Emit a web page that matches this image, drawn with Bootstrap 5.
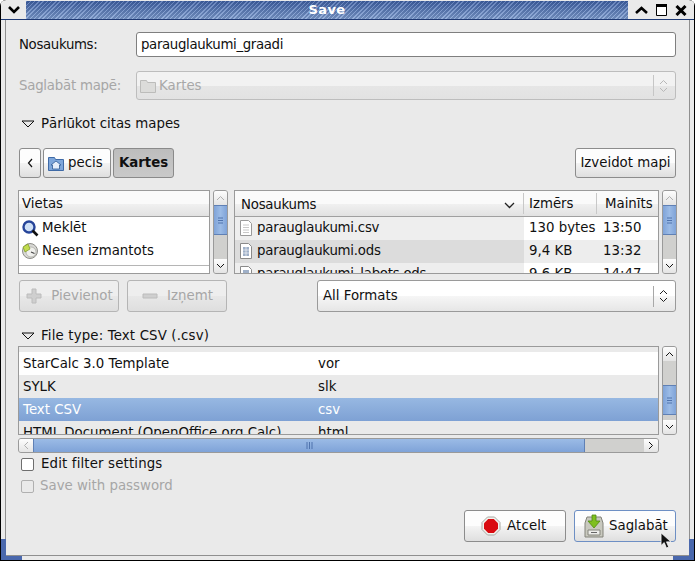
<!DOCTYPE html>
<html lang="lv">
<head>
    <meta charset="UTF-8">
    <meta name="viewport" content="width=device-width, initial-scale=1.0">
    <title>Save</title>
    <link href="https://cdn.jsdelivr.net/npm/bootstrap@5.3.0/dist/css/bootstrap.min.css" rel="stylesheet">
    <style>
        html, body { margin: 0; height: 561px; overflow: hidden; background: #fff; }
        body, .btn, .form-control { font-family: "DejaVu Sans", sans-serif; font-size: 13.33px; line-height: 16px; color: #101010; }

        /* window frame */
        .gtk-win { position: relative; width: 695px; height: 561px; background: #000; padding: 0 1px; border-radius: 6px 6px 0 0; overflow: hidden; }
        .gtk-frame { height: 560px; background: #eaeaea; display: flex; flex-direction: column; border-radius: 5px 5px 0 0; }
        .gtk-title { height: 19px; flex: none; display: flex; border-bottom: 1px solid #1f3a75; margin-top: 1px; }
        .gtk-menu-btn { width: 25px; background: #eaeaea; display: flex; align-items: center; justify-content: center; }
        .gtk-hatch { flex: 1; text-align: center; color: #fff; font-weight: 700; font-size: 13px; line-height: 18px; letter-spacing: .4px;
            background: repeating-linear-gradient(135deg, rgba(255,255,255,.2) 0 1px, rgba(0,0,0,.12) 1px 3px), linear-gradient(#3f62a8, #7f9fd4); }
        .gtk-wm-btns { width: 66px; background: #eaeaea; display: flex; align-items: center; justify-content: space-around; padding: 0 3px; }
        .gtk-inner { flex: 1; border: 4px solid #eaeaea; border-top: 0; min-height: 0; }
        .gtk-content { height: 100%; border: 1px solid #8f8f8f; border-top: 0; padding: 12px 13px 0 12px; position: relative; }
        .gtk-corner { position: absolute; background: #4a68ad; }
        .gtk-c1 { left: 1px; top: 539px; width: 5px; height: 21px; }
        .gtk-c2 { left: 1px; top: 556px; width: 21px; height: 4px; }
        .gtk-c3 { right: 1px; top: 539px; width: 5px; height: 21px; }
        .gtk-c4 { right: 1px; top: 556px; width: 21px; height: 4px; }
        .gtk-cursor { position: absolute; left: 660px; top: 532px; }

        /* widgets */
        .gtk-label { width: 118px; flex: none; padding-left: 1px; }
        .gtk-off { color: #a6a6a6; }
        .gtk-ls-a { letter-spacing: -.35px; }
        .gtk-ls-b { letter-spacing: -.24px; }
        .gtk-ls-c { letter-spacing: .15px; }
        .gtk-entry { height: 25px; border: 1px solid #7f7f7f; border-radius: 3px; background: #fff; padding: 3px 4px; box-shadow: none; }
        .gtk-combo { height: 29px; border: 1px solid #9a9a9a; border-radius: 3px; display: flex; align-items: center; background: linear-gradient(#ffffff 0 50%, #f6f6f6 50%, #e6e6e6); }
        .gtk-combo.is-off { background: linear-gradient(#f2f2f2 0 50%, #e6e6e6 50%, #e2e2e2); border-color: #bdbdbd; color: #a8a8a8; }
        .gtk-sep { width: 1px; height: 21px; background: #a8a8a8; }
        .gtk-combo.is-off .gtk-sep { background: #c6c6c6; }
        .gtk-btn { display: inline-flex; align-items: center; justify-content: center; border: 1px solid #8c8c8c; border-radius: 3px; padding: 0; color: #101010; background: linear-gradient(#fdfdfd 0 50%, #f4f4f4 50%, #dfdfdf); }
        .gtk-btn.is-on { background: linear-gradient(#bdbdbd, #c9c9c9); font-weight: 700; border-color: #8a8a8a; }
        .gtk-btn:disabled { color: #a6a6a6; border-color: #b5b5b5; background: linear-gradient(#eeeeee 0 50%, #e8e8e8 50%, #dedede); opacity: 1; }
        .gtk-btn.is-default { border-color: #6d8fc4; }
        .gtk-path-btn { height: 30px; }
        .gtk-tri { width: 14px; flex: none; margin-right: 6px; }

        /* file lists */
        .gtk-list { border: 1px solid #9a9a9a; background: #fff; overflow: hidden; height: 84px; flex: none; }
        .gtk-head { height: 26px; display: flex; border-bottom: 1px solid #a0a0a0; background: linear-gradient(#fafafa 0 50%, #f1f1f1 50%, #e2e2e2); }
        .gtk-head > div { padding: 3px 3px 0; margin: 2px 0; border-right: 1px solid #c8c8c8; }
        .gtk-row { height: 23px; padding-bottom: 2px; display: flex; align-items: center; white-space: nowrap; }
        .gtk-scroll-v { width: 15px; border: 1px solid #9a9a9a; border-radius: 3px; background: #d0d0ce; display: flex; flex-direction: column; overflow: hidden; flex: none; margin-left: 3px; }
        .gtk-sb-end { height: 14px; flex: none; background: linear-gradient(#fdfdfd, #e4e4e4); display: flex; align-items: center; justify-content: center; }
        .gtk-sb-thumb { height: 30px; background: linear-gradient(90deg, #7fa3d8, #9bbbe6 50%, #7fa3d8); border: 1px solid #5f80b5; display: flex; align-items: center; justify-content: center; flex: none; margin: 0 -1px; }
        .gtk-sb-gap { height: 5px; flex: none; }
        .gtk-places { width: 192px; }
        .gtk-files { width: 425px; margin-left: 6px; }
        .gtk-places-ic { margin: 0 3px 0 2px; flex: none; }
        .gtk-list-rule { height: 1px; background: #b5b5b5; margin: 2px 0 3px; }
        .gtk-col-name { width: 289px; flex: none; }
        .gtk-col-size { width: 73px; flex: none; }
        .gtk-col-date { width: 61px; flex: none; }
        .gtk-head .gtk-col-name { padding-left: 6px; }
        .gtk-head .gtk-col-size { padding-left: 5px; }
        .gtk-head .gtk-col-date { padding-left: 8px; }
        .gtk-cell { padding-left: 5px; }
        .gtk-date-cell { padding-left: 6px; }
        .gtk-sorted, .gtk-sorted-alt { height: 23px; padding-bottom: 2px; align-self: flex-start; }
        .gtk-sorted { background: #eeeeee; }
        .gtk-row-alt { background: #ededed; }
        .gtk-sorted-alt { background: #dcdcdc; }
        .gtk-fic { margin: 0 3px; flex: none; }

        /* filter list */
        .gtk-filter { width: 641px; flex: none; }
        .gtk-flist { height: 89px; border: 1px solid #9a9a9a; overflow: hidden; padding-top: 5px; }
        .gtk-frow { height: 23px; display: flex; align-items: center; padding-left: 4px; white-space: nowrap; }
        .gtk-frow.is-sel { background: linear-gradient(#97b8e2, #7ea1d4); color: #fff; }
        .gtk-fname { width: 295px; flex: none; }
        .gtk-scroll-h { height: 15px; margin-top: 3px; display: flex; border: 1px solid #9a9a9a; border-radius: 3px; background: #d0d0ce; overflow: hidden; }
        .gtk-hl { width: 14px; height: 100%; flex: none; }
        .gtk-hthumb { width: 552px; flex: none; margin: -1px 0; background: linear-gradient(#9bbbe6, #7fa3d8); border: 1px solid #5f80b5; display: flex; align-items: center; justify-content: center; }
        .gtk-sb-filter { height: 89px; }
        .gtk-check { width: 13px; height: 13px; border: 1px solid #6e6e6e; background: #fff; border-radius: 2px; flex: none; margin-right: 7px; }
        .gtk-check.is-off { border-color: #b0b0b0; background: #eaeaea; margin-right: 6px; }

        /* vertical rhythm */
        .gtk-row-save { margin-top: 14px; }
        .gtk-combo-ic { margin: 0 3px; flex: none; }
        .gtk-exp { height: 16px; padding-left: 3px; }
        .gtk-exp1 { margin-top: 16px; }
        .gtk-pathbar { margin-top: 16px; gap: 2px; padding-left: 1px; }
        .gtk-w22 { width: 22px; } .gtk-w61 { width: 61px; } .gtk-w101 { width: 101px; }
        .gtk-w68 { width: 68px; justify-content: flex-start; padding-left: 4px; }
        .gtk-lists { margin-top: 12px; height: 84px; }
        .gtk-actions { margin-top: 6px; height: 32px; gap: 8px; padding-left: 1px; }
        .gtk-act { width: 100px; height: 32px; }
        .gtk-fmt { width: 359px; height: 32px; }
        .gtk-fmt-txt { padding-left: 5px; }
        .gtk-exp2 { margin-top: 16px; }
        .gtk-filter-wrap { margin-top: 2px; height: 107px; }
        .gtk-chk { height: 20px; padding-left: 3px; }
        .gtk-chk1 { margin-top: 1px; }
        .gtk-chk2 { margin-top: 2px; }
        .gtk-bottom { margin-top: 14px; gap: 8px; }
        .gtk-dlg { width: 102px; height: 32px; justify-content: flex-start; }
        .gtk-dlg-a { padding-left: 16px; }
        .gtk-dlg-a svg { margin-right: 6px; }
        .gtk-dlg-b { padding-left: 9px; }
        .gtk-dlg-b svg { margin-right: 5px; }
    </style>
</head>
<body>
<div class="gtk-win">
    <div class="gtk-frame">
        <div class="gtk-title">
            <div class="gtk-menu-btn"><svg width="12" height="8" viewBox="0 0 12 8"><path d="M1 1l5 5 5-5" fill="none" stroke="#000" stroke-width="2.6"/></svg></div>
            <div class="gtk-hatch">Save</div>
            <div class="gtk-wm-btns">
                <svg width="13" height="8" viewBox="0 0 13 8"><path d="M1 7l5.500-5 5.500 5" fill="none" stroke="#000" stroke-width="2.600"/></svg>
                <svg width="11" height="12" viewBox="0 0 11 12"><path d="M.5 .5h10v11H.5z" fill="#fff" stroke="#000"/><path d="M0 0h11v3H0z"/></svg>
                <svg width="12" height="11" viewBox="0 0 12 11"><path d="M1.500 1l9 9M10.500 1l-9 9" fill="none" stroke="#000" stroke-width="3"/></svg>
            </div>
        </div>
        <div class="gtk-inner">
            <div class="gtk-content">
                <div class="d-flex align-items-center">
                    <div class="gtk-label gtk-ls-a">Nosaukums:</div>
                    <input class="form-control gtk-entry gtk-ls-a" type="text" value="parauglaukumi_graadi">
                </div>

                <div class="d-flex align-items-center gtk-row-save">
                    <div class="gtk-label gtk-off gtk-ls-b">Saglabāt mapē:</div>
                    <div class="gtk-combo is-off flex-grow-1">
                        <svg class="gtk-combo-ic" width="16" height="16" viewBox="0 0 16 16"><path d="M.5 2.500h6l1 2h8v10H.5z" fill="#dcdcda" stroke="#bcbcba"/></svg>
                        <span class="flex-grow-1">Kartes</span>
                        <span class="gtk-sep"></span>
                        <svg class="flex-none" width="21" height="16" viewBox="0 0 21 16"><path d="M6 6l3.500-3.500L13 6M6 10l3.500 3.500L13 10" fill="none" stroke="#b8b8b8"/></svg>
                    </div>
                </div>

                <div class="d-flex align-items-center gtk-exp gtk-exp1">
                    <svg class="gtk-tri" width="14" height="8" viewBox="0 0 14 8"><path d="M1 1h12L7 7z" fill="none" stroke="#111"/></svg>
                    <span>Pārlūkot citas mapes</span>
                </div>

                <div class="d-flex gtk-pathbar">
                    <button class="btn gtk-btn gtk-path-btn gtk-w22" type="button"><svg width="7" height="10" viewBox="0 0 7 10"><path d="M5 1L1.500 5 5 9" fill="none" stroke="#111" stroke-width="1.200"/></svg></button>
                    <button class="btn gtk-btn gtk-path-btn gtk-w68" type="button">
                        <svg width="16" height="17" viewBox="0 0 16 17" class="me-1"><path d="M.5 2.500h6l1 2h8v11H.5z" fill="#7ea6da" stroke="#3f6aa6"/><path d="M8 6l-5 4h1.500v4h7v-4H13z" fill="#e6eefa" stroke="#2f5a96" stroke-width=".8"/></svg>pecis</button>
                    <button class="btn gtk-btn gtk-path-btn is-on gtk-w61" type="button">Kartes</button>
                    <button class="btn gtk-btn gtk-path-btn ms-auto gtk-w101" type="button">Izveidot mapi</button>
                </div>

                <div class="d-flex gtk-lists">
                    <div class="gtk-list gtk-places">
                        <div class="gtk-head"><div class="border-0">Vietas</div></div>
                        <div class="gtk-row"><svg width="18" height="18" viewBox="0 0 18 18" class="gtk-places-ic"><circle cx="8" cy="8" r="5.500" fill="#cfe0f6" stroke="#27459a" stroke-width="2.400"/><path d="M11.500 11.500l5 5" stroke="#111" stroke-width="2.600"/></svg>Meklēt</div>
                        <div class="gtk-row"><svg width="18" height="18" viewBox="0 0 18 18" class="gtk-places-ic"><circle cx="9" cy="9" r="7.500" fill="#d8d8d4" stroke="#8d8d88"/><circle cx="10" cy="10" r="5" fill="#efefec" stroke="#a8a8a2" stroke-width=".7"/><path d="M2 5l5-3 2 5-5 3z" fill="#c2dc4e" stroke="#7d9a20" stroke-width=".7"/><path d="M10 10l3.500 1.500" stroke="#444" stroke-width="1.200"/></svg>Nesen izmantots</div>
                        <div class="gtk-list-rule"></div>
                        <div class="gtk-row"><svg width="18" height="16" viewBox="0 0 18 16" class="gtk-places-ic"><path d="M1 3h6l1 2h9v10H1z" fill="#7ea6da" stroke="#3f6aa6"/></svg>pecis</div>
                    </div>
                    <div class="gtk-scroll-v">
                        <div class="gtk-sb-end"><svg width="9" height="6" viewBox="0 0 9 6"><path d="M1 5l3.500-3.500L8 5" fill="none" stroke="#b0b0b0"/></svg></div>
                        <div class="gtk-sb-thumb"><svg width="7" height="7" viewBox="0 0 7 7"><path d="M1 1h5M1 3.500h5M1 6h5" stroke="#4f73ad"/></svg></div>
                        <div class="flex-grow-1"></div>
                        <div class="gtk-sb-end"><svg width="9" height="6" viewBox="0 0 9 6"><path d="M1 1l3.500 3.500L8 1" fill="none" stroke="#111"/></svg></div>
                    </div>
                    <div class="gtk-list gtk-files">
                        <div class="gtk-head">
                            <div class="gtk-col-name d-flex justify-content-between align-items-center pe-2 gtk-ls-b">Nosaukums <svg width="11" height="7" viewBox="0 0 11 7"><path d="M1 1l4.500 4.500L10 1" fill="none" stroke="#222" stroke-width="1.300"/></svg></div>
                            <div class="gtk-col-size">Izmērs</div>
                            <div class="gtk-col-date border-0">Mainīts</div>
                        </div>
                        <div class="gtk-row">
                            <div class="gtk-col-name gtk-sorted d-flex align-items-center gtk-ls-b"><svg width="16" height="18" viewBox="0 0 16 18" class="gtk-fic"><path d="M2.500 1.500h8l3 3v12h-11z" fill="#fff" stroke="#9a9a9a"/><path d="M5 6h6M5 8.500h6M5 11h6M5 13.500h6" stroke="#c8c8c8"/></svg>parauglaukumi.csv</div>
                            <div class="gtk-col-size gtk-cell">130 bytes</div>
                            <div class="gtk-col-date gtk-date-cell">13:50</div>
                        </div>
                        <div class="gtk-row gtk-row-alt">
                            <div class="gtk-col-name gtk-sorted-alt d-flex align-items-center gtk-ls-b"><svg width="16" height="18" viewBox="0 0 16 18" class="gtk-fic"><path d="M2.500 1.500h8l3 3v12h-11z" fill="#fff" stroke="#8a8a8a"/><path d="M5 5h6v9H5z" fill="#9fb0c8"/><path d="M5 8h6M5 11h6M8 5v9" stroke="#fff" stroke-width=".6"/></svg>parauglaukumi.ods</div>
                            <div class="gtk-col-size gtk-cell">9,4 KB</div>
                            <div class="gtk-col-date gtk-date-cell">13:32</div>
                        </div>
                        <div class="gtk-row">
                            <div class="gtk-col-name gtk-sorted d-flex align-items-center gtk-ls-b"><svg width="16" height="18" viewBox="0 0 16 18" class="gtk-fic"><path d="M2.500 1.500h8l3 3v12h-11z" fill="#fff" stroke="#8a8a8a"/><path d="M5 5h6v9H5z" fill="#9fb0c8"/></svg>parauglaukumi_labots.ods</div>
                            <div class="gtk-col-size gtk-cell">9,6 KB</div>
                            <div class="gtk-col-date gtk-date-cell">14:47</div>
                        </div>
                    </div>
                    <div class="gtk-scroll-v">
                        <div class="gtk-sb-end"><svg width="9" height="6" viewBox="0 0 9 6"><path d="M1 5l3.500-3.500L8 5" fill="none" stroke="#b0b0b0"/></svg></div>
                        <div class="gtk-sb-thumb"><svg width="7" height="7" viewBox="0 0 7 7"><path d="M1 1h5M1 3.500h5M1 6h5" stroke="#4f73ad"/></svg></div>
                        <div class="flex-grow-1"></div>
                        <div class="gtk-sb-end"><svg width="9" height="6" viewBox="0 0 9 6"><path d="M1 1l3.500 3.500L8 1" fill="none" stroke="#111"/></svg></div>
                    </div>
                </div>

                <div class="d-flex gtk-actions">
                    <button class="btn gtk-btn gtk-act" type="button" disabled>
                        <svg width="18" height="18" viewBox="0 0 18 18" class="me-2"><path d="M7 2h4v5h5v4h-5v5H7v-5H2V7h5z" fill="#cfcfcf" stroke="#bcbcbc"/></svg>Pievienot</button>
                    <button class="btn gtk-btn gtk-act" type="button" disabled>
                        <svg width="18" height="18" viewBox="0 0 18 18" class="me-2"><path d="M2 7h14v4H2z" fill="#cfcfcf" stroke="#bcbcbc"/></svg>Izņemt</button>
                    <div class="gtk-combo ms-auto gtk-fmt">
                        <span class="flex-grow-1 gtk-fmt-txt">All Formats</span>
                        <span class="gtk-sep"></span>
                        <svg width="21" height="16" viewBox="0 0 21 16"><path d="M6 6l3.500-3.500L13 6M6 10l3.500 3.500L13 10" fill="none" stroke="#222"/></svg>
                    </div>
                </div>

                <div class="d-flex align-items-center gtk-exp gtk-exp2">
                    <svg class="gtk-tri" width="14" height="8" viewBox="0 0 14 8"><path d="M1 1h12L7 7z" fill="none" stroke="#111"/></svg>
                    <span class="gtk-ls-c">File type: Text CSV (.csv)</span>
                </div>

                <div class="d-flex gtk-filter-wrap">
                    <div class="gtk-filter">
                        <div class="gtk-flist">
                            <div class="gtk-frow bg-white"><span class="gtk-fname">StarCalc 3.0 Template</span><span>vor</span></div>
                            <div class="gtk-frow"><span class="gtk-fname">SYLK</span><span>slk</span></div>
                            <div class="gtk-frow is-sel"><span class="gtk-fname">Text CSV</span><span>csv</span></div>
                            <div class="gtk-frow"><span class="gtk-fname">HTML Document (OpenOffice.org Calc)</span><span>html</span></div>
                        </div>
                        <div class="gtk-scroll-h">
                            <div class="gtk-sb-end gtk-hl"><svg width="6" height="9" viewBox="0 0 6 9"><path d="M5 1L1.500 4.500 5 8" fill="none" stroke="#b0b0b0"/></svg></div>
                            <div class="gtk-hthumb"><svg width="7" height="7" viewBox="0 0 7 7"><path d="M1 0v7M3.500 0v7M6 0v7" stroke="#4f73ad"/></svg></div>
                            <div class="flex-grow-1"></div>
                            <div class="gtk-sb-end gtk-hl"><svg width="6" height="9" viewBox="0 0 6 9"><path d="M1 1l3.500 3.500L1 8" fill="none" stroke="#111"/></svg></div>
                        </div>
                    </div>
                    <div class="gtk-scroll-v gtk-sb-filter">
                        <div class="gtk-sb-end"><svg width="9" height="6" viewBox="0 0 9 6"><path d="M1 5l3.500-3.500L8 5" fill="none" stroke="#111"/></svg></div>
                        <div class="flex-grow-1"></div>
                        <div class="gtk-sb-thumb"><svg width="7" height="7" viewBox="0 0 7 7"><path d="M1 1h5M1 3.500h5M1 6h5" stroke="#4f73ad"/></svg></div>
                        <div class="gtk-sb-gap"></div>
                        <div class="gtk-sb-end"><svg width="9" height="6" viewBox="0 0 9 6"><path d="M1 1l3.500 3.500L8 1" fill="none" stroke="#111"/></svg></div>
                    </div>
                </div>

                <div class="d-flex align-items-center gtk-chk gtk-chk1 gtk-ls-c"><span class="gtk-check"></span>Edit filter settings</div>
                <div class="d-flex align-items-center gtk-chk gtk-chk2 gtk-off"><span class="gtk-check is-off"></span>Save with password</div>

                <div class="d-flex justify-content-end gtk-bottom">
                    <button class="btn gtk-btn gtk-dlg gtk-dlg-a" type="button">
                        <svg width="20" height="20" viewBox="0 0 20 20"><path d="M6.500 1h7L19 6.500v7L13.500 19h-7L1 13.500v-7z" fill="#f2f2ee" stroke="#a8a8a2"/><path d="M7.200 3h5.600L17 7.200v5.600L12.800 17H7.200L3 12.800V7.200z" fill="#d90b10"/></svg><span class="gtk-ls-c">Atcelt</span></button>
                    <button class="btn gtk-btn gtk-dlg gtk-dlg-b is-default" type="button">
                        <svg width="20" height="24" viewBox="0 0 20 24"><path d="M3 3h14l2 6v14H1V9z" fill="#c9c9bf" stroke="#83837b"/><path d="M4 16h12v5H4z" fill="#ededea" stroke="#85857d"/><path d="M7 18.500h6" stroke="#666"/><path d="M8 1h4v6h4l-6 7-6-7h4z" fill="#7fbf1f" stroke="#4f8a10" stroke-width=".8"/></svg>Saglabāt</button>
                </div>
            </div>
        </div>
    </div>
    <div class="gtk-corner gtk-c1"></div><div class="gtk-corner gtk-c2"></div>
    <div class="gtk-corner gtk-c3"></div><div class="gtk-corner gtk-c4"></div>
    <svg class="gtk-cursor" width="12" height="17" viewBox="0 0 13 19"><path d="M1 1v14l3.500-3.200 2.500 6 2.500-1-2.500-5.800H12z" fill="#111" stroke="#fff" stroke-width=".8"/></svg>
</div>
<script src="https://cdn.jsdelivr.net/npm/bootstrap@5.3.0/dist/js/bootstrap.bundle.min.js"></script>
</body>
</html>
